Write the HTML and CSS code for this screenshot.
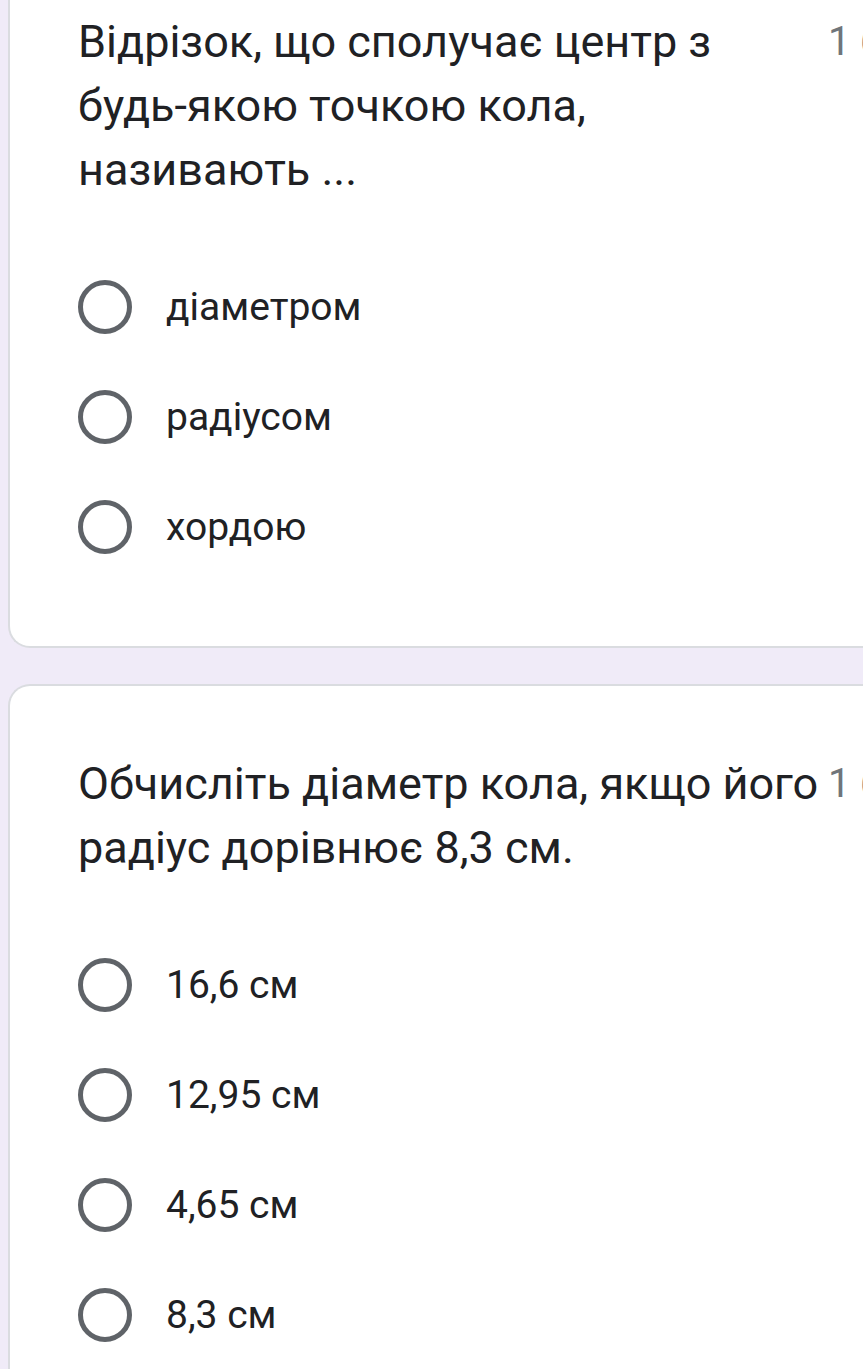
FILE: index.html
```html
<!DOCTYPE html>
<html lang="uk">
<head>
<meta charset="utf-8">
<link rel="stylesheet" href="styles.css">
</head>
<body>
<div class="page">
  <div class="card card-first">
    <div class="qhead">
      <div class="qtext">Відрізок, що сполучає центр з будь-якою точкою кола, називають ...</div>
      <div class="points">1 бал</div>
    </div>
    <div class="options">
      <div class="option"><span class="radio"></span><span class="label">діаметром</span></div>
      <div class="option"><span class="radio"></span><span class="label">радіусом</span></div>
      <div class="option"><span class="radio"></span><span class="label">хордою</span></div>
    </div>
  </div>
  <div class="card card-second">
    <div class="qhead">
      <div class="qtext">Обчисліть діаметр кола, якщо його радіус дорівнює 8,3 см.</div>
      <div class="points">1 бал</div>
    </div>
    <div class="options">
      <div class="option"><span class="radio"></span><span class="label">16,6 см</span></div>
      <div class="option"><span class="radio"></span><span class="label">12,95 см</span></div>
      <div class="option"><span class="radio"></span><span class="label">4,65 см</span></div>
      <div class="option"><span class="radio"></span><span class="label">8,3 см</span></div>
    </div>
  </div>
</div>
</body>
</html>
```

FILE: styles.css
```css
html, body {
  margin: 0;
  padding: 0;
  background: #f0ebf8;
  overflow: hidden;
}
.page {
  width: 863px;
  height: 1369px;
  padding-left: 8px;
  box-sizing: border-box;
  display: flex;
  flex-direction: column;
  gap: 36px;
  overflow: hidden;
}
.card {
  background: #ffffff;
  border: 2px solid #dadce0;
  border-right: none;
  border-radius: 22px 0 0 22px;
  margin-right: -200px;
  padding-left: 68px;
  flex: none;
}
.card-first {
  border-top: none;
  border-top-left-radius: 0;
  padding-top: 10px;
  padding-bottom: 64px;
}
.card-second {
  padding-top: 66px;
  padding-bottom: 40px;
}
.qhead {
  display: grid;
  grid-template-columns: 744px auto;
  column-gap: 6px;
  align-items: start;
}
.qtext {
  font-family: "Roboto", sans-serif;
  font-size: 45px;
  line-height: 64px;
  color: #202124;
}
.points {
  font-family: "Roboto", sans-serif;
  font-size: 40px;
  line-height: 64px;
  color: #70757a;
  white-space: nowrap;
}
.options {
  margin-top: 50px;
  display: flex;
  flex-direction: column;
}
.option {
  height: 110px;
  display: flex;
  align-items: center;
}
.radio {
  width: 54px;
  height: 54px;
  box-sizing: border-box;
  border: 5.5px solid #5f6368;
  border-radius: 50%;
  flex: none;
}
.label {
  margin-left: 34px;
  font-family: "Roboto", sans-serif;
  font-size: 39px;
  color: #202124;
}
```
